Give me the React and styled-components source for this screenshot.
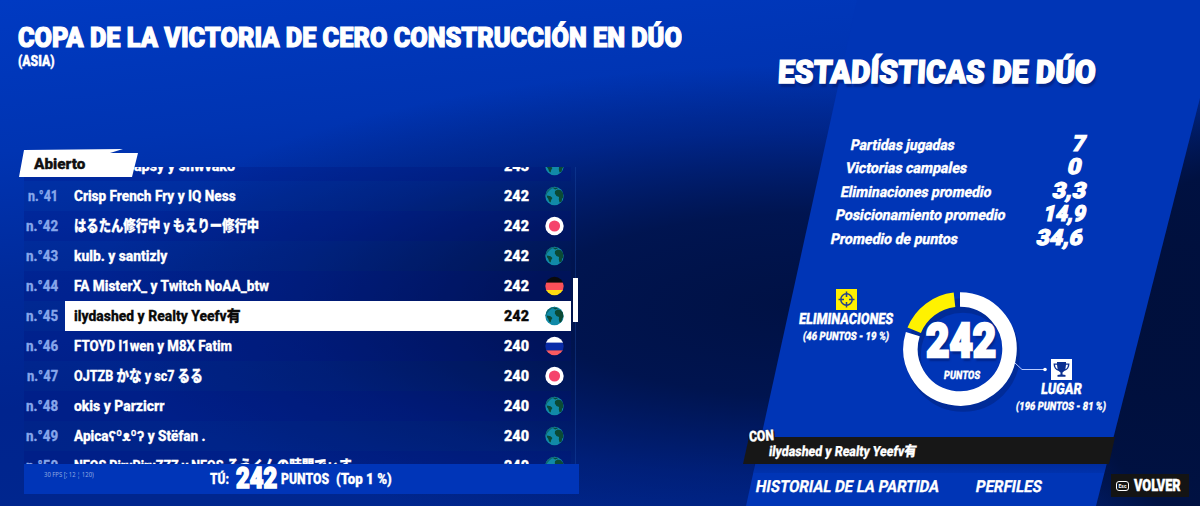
import React, { useLayoutEffect, useRef } from 'react'
import styled, { createGlobalStyle, css } from 'styled-components'

const GlobalStyle = createGlobalStyle`
    * { box-sizing: border-box; }
    body {
        margin: 0;
        overflow: hidden;
        font-family: Roboto, 'Noto Sans CJK JP', sans-serif;
        color: white;
    }
`
const Page = styled.div`
    position: relative;
    display: flex;
    width: 1200px;
    height: 506px;
    overflow: hidden;
    background:
        radial-gradient(ellipse 280px 300px at 1250px 350px, rgba(0, 15, 58, 0.95), rgba(0, 15, 58, 0.9) 60%, rgba(0, 15, 58, 0) 100%),
        radial-gradient(ellipse 720px 240px at 810px 305px, rgba(0, 16, 64, 0.95), rgba(0, 17, 68, 0.85) 38%, rgba(0, 18, 80, 0.35) 72%, rgba(0, 20, 90, 0) 100%),
        linear-gradient(174deg, #003ac2 0%, #0034b2 24%, #002a9a 45%, #00248e 65%, #00268e 82%, #002892 100%);
`
const FitBox = styled.span`
    display: inline-block;
    flex: none;
    white-space: pre;
    width: ${(p) => p.$w}px;
`
const FitInner = styled.span`
    display: inline-block;
    transform-origin: 0 50%;
    font-size: ${(p) => p.$size}px;
    font-weight: ${(p) => p.$weight || 900};
    -webkit-text-stroke: ${(p) => p.$stroke ?? 0.3}px currentColor;
    ${(p) => p.$shadow && css`text-shadow: 2px 4px 2px rgba(0, 20, 90, 0.45);`}
`
// Squeezes the text horizontally to the condensed width
const Fit = ({ w, size, weight, stroke, slant, shadow, children }) => {
    const ref = useRef(null)
    useLayoutEffect(() => {
        const el = ref.current
        el.style.transform = `skewX(${-(slant || 0)}deg) scaleX(${w / el.offsetWidth})`
    }, [w, slant])
    return (
        <FitBox $w={w}>
            <FitInner ref={ref} $size={size} $weight={weight} $stroke={stroke} $shadow={shadow}>{children}</FitInner>
        </FitBox>
    )
}

/* left side */
const Left = styled.main`
    width: 740px;
    height: 506px;
    display: flex;
    flex-direction: column;
`
const Header = styled.header`
    height: 150px;
    padding: 19px 0 0 18px;
    display: flex;
    flex-direction: column;
`
const Title = styled.h1`
    margin: 0;
    height: 34px;
    line-height: 34px;
`
const Region = styled.div`
    height: 16px;
    line-height: 16px;
`
const Board = styled.section`
    position: relative;
    margin: 17px 0 0 24px;
    width: 555px;
    height: 297px;
    display: flex;
`
const List = styled.div`
    width: 547px;
    height: 297px;
    flex: none;
    overflow: hidden;
    display: flex;
    flex-direction: column;
    justify-content: center;
`
const Tab = styled.div`
    position: absolute;
    left: -5px;
    top: -18px;
    width: 120px;
    height: 28px;
    padding: 5px 0 0 15px;
    line-height: 20px;
    color: #111;
    background: white;
    clip-path: polygon(5px 1px, 104px 0, 91px 4px, 119px 4px, 113px 28px, 0 28px);
`
const Row = styled.div`
    flex: none;
    display: flex;
    align-items: center;
    height: 30px;
    background: ${(p) => (p.$odd ? 'rgba(0, 14, 120, 0.25)' : 'rgba(0, 30, 110, 0.12)')};
`
const Rank = styled.div`
    width: 41px;
    display: flex;
    justify-content: flex-end;
    padding-right: 7px;
    color: #86a6ea;
`
const Entry = styled.div`
    flex: 1;
    height: 30px;
    display: flex;
    align-items: center;
    padding: 0 7px 0 ${(p) => 9 + (p.$indent || 0)}px;
    line-height: 29px;
    ${(p) => p.$active && css`
        background: white;
        color: #0a0a0a;
    `}
`
const Score = styled.div`
    margin-left: auto;
    margin-right: 16px;
    height: 30px;
`
const Track = styled.div`
    width: 8px;
    display: flex;
    justify-content: center;
    padding-top: 111px;
    background: linear-gradient(90deg, transparent 4px, rgba(30, 80, 170, 0.35) 4px, rgba(30, 80, 170, 0.35) 5px, transparent 5px);
`
const Thumb = styled.div`
    flex: none;
    width: 5px;
    height: 44px;
    background: white;
`
const Summary = styled.footer`
    position: relative;
    margin-left: 24px;
    width: 555px;
    height: 30px;
    padding-left: 186px;
    display: flex;
    align-items: center;
    line-height: 30px;
    background: #0035b8;
`
const Total = styled.div`
    padding-top: 3px;
`
const Fps = styled.div`
    position: absolute;
    left: 20px;
    top: 2px;
    font-family: 'Noto Sans', sans-serif;
    line-height: 10px;
    color: #8fa9e0;
`
const Gap = styled.span`
    flex: none;
    width: ${(p) => p.$w}px;
`

/* right side */
const Right = styled.aside`
    width: 460px;
    height: 506px;
    display: flex;
    flex-direction: column;
`
const Slab = styled.div`
    position: absolute;
    left: 746px;
    top: 0;
    width: 454px;
    height: 506px;
    background: #0035b6;
    clip-path: polygon(111px 0, 479px 0, 350px 506px, 0 506px);
`
const SlabBody = styled.div`
    position: relative;
    display: flex;
    flex-direction: column;
    height: 506px;
`
const StatsTitle = styled.h2`
    margin: 0;
    padding: 50px 0 0 38px;
    height: 132px;
    line-height: 44px;
`
const Stat = styled.div`
    display: flex;
    height: 23.4px;
    line-height: 24px;
    padding-left: ${(p) => p.$left}px;
    width: ${(p) => p.$end}px;
    justify-content: space-between;
`
const StatLabel = styled.div`
    padding-top: 1px;
`
const Chart = styled.div`
    display: flex;
    height: 176px;
    margin-top: 11px;
    padding: 29px 0 0 57px;
`
const Legend = styled.div`
    flex: none;
    width: 98px;
    margin-top: ${(p) => p.$top || 0}px;
    margin-left: ${(p) => p.$left || 0}px;
    display: flex;
    flex-direction: column;
    align-items: center;
    line-height: 18px;
`
const LegendNote = styled.div`
    line-height: 13px;
`
const Ring = styled.div`
    position: relative;
    flex: none;
    width: 130px;
    height: 130px;
    margin: -1px 0 0 4px;
`
const RingText = styled.div`
    position: absolute;
    inset: 0;
    display: flex;
    flex-direction: column;
    align-items: center;
    padding: 31px 7px 0 0;
    line-height: 44px;
`
const RingNumber = styled.div`
    height: 44px;
    margin-bottom: 1px;
`
const RingUnit = styled.div`
    padding-left: 3px;
    line-height: 20px;
`
const Team = styled.div`
    position: relative;
    flex: none;
    margin: 1px 0 0 3px;
    width: 372px;
    height: 27px;
    padding-left: 26px;
    line-height: 27px;
    background: #171717;
    clip-path: polygon(6px 0, 372px 0, 366px 27px, 0 27px);
`
const TeamShade = styled.div`
    height: 9px;
    margin-left: 14px;
    width: 356px;
    background: linear-gradient(rgba(0, 20, 90, 0.28), rgba(0, 20, 90, 0.1));
`
const With = styled.div`
    position: absolute;
    left: 7px;
    top: 426px;
    line-height: 20px;
    padding: 0 2px;
    transform: rotate(-4deg);
    text-shadow: 0 0 2px #171717, 2px 2px 0 #171717, -1px 2px 0 #171717;
`
const Links = styled.nav`
    display: flex;
    padding: 2px 0 0 16px;
    line-height: 24px;
`
const Back = styled.button`
    position: absolute;
    left: 371px;
    top: 474px;
    width: 78px;
    height: 23px;
    border: 0;
    padding: 0 0 0 5px;
    display: flex;
    align-items: center;
    gap: 5px;
    color: white;
    font-family: inherit;
    line-height: 25px;
    background: #141414;
`
const Key = styled.span`
    width: 13px;
    height: 10px;
    border: 1px solid white;
    border-radius: 3px;
    display: flex;
    justify-content: center;
    font-size: 5px;
    line-height: 8px;
`

const Flag = ({ kind }) => (
    <svg width="19" height="30" viewBox="0 0 19 30">
        <defs>
            <clipPath id="disc"><circle cx="9.5" cy="15" r="9.2" /></clipPath>
        </defs>
        <g clipPath="url(#disc)">
            {kind === 'world' && (
                <>
                    <rect y="5" width="19" height="20" fill="#118aa8" />
                    <path d="M0 15 C0.500 10 3 7 7 5 L11 5 10 6.500 7 7.500 4.500 9.500 2 12.500 1.200 15 Z" fill="#0e6a72" />
                    <path d="M2.2 14.5 L5.6 15.2 7.4 17 6.2 19 5.6 21.500 4.200 20.500 3 17.500 1.8 16 Z" fill="#0b4a36" />
                    <path d="M10 10 L12.500 8.600 15.500 9 18 11.500 18.600 16 17.300 17.500 16.500 21 14.500 21.500 13.800 18.500 14 16 11.500 15 9.800 12.600 Z" fill="#0b4a36" />
                    <path d="M8 7.500 L11.500 6.400 13 7.200 10.400 8.600 Z" fill="#0b4a36" />
                </>
            )}
            {kind === 'jp' && (
                <>
                    <rect y="5" width="19" height="20" fill="#fff" />
                    <circle cx="9.5" cy="15" r="5.6" fill="#f5436b" />
                </>
            )}
            {kind === 'de' && (
                <>
                    <rect y="5" width="19" height="7" fill="#0a0a0a" />
                    <rect y="11.6" width="19" height="8" fill="#fb5058" />
                    <rect y="19" width="19" height="6" fill="#ffdc10" />
                </>
            )}
            {kind === 'ru' && (
                <>
                    <rect y="5" width="19" height="7" fill="#fff" />
                    <rect y="11.6" width="19" height="8" fill="#0a2ca8" />
                    <rect y="19.4" width="19" height="6" fill="#fb5a60" />
                </>
            )}
        </g>
    </svg>
)

const rows = [
    { name: 'apsy y shwvako', w: 101, indent: 60, score: '243', flag: 'world' },
    { rank: '41', rw: 30, name: 'Crisp French Fry y IQ Ness', w: 162, score: '242', flag: 'world' },
    { rank: '42', rw: 32, name: 'はるたん修行中 y もえりー修行中', w: 185, score: '242', flag: 'jp' },
    { rank: '43', rw: 32, name: 'kulb. y santizly', w: 93, score: '242', flag: 'world' },
    { rank: '44', rw: 32, name: 'FA MisterX_ y Twitch NoAA_btw', w: 195, score: '242', flag: 'de' },
    { rank: '45', rw: 32, name: 'ilydashed y Realty Yeefv有', w: 167, score: '242', flag: 'world', active: true },
    { rank: '46', rw: 32, name: 'FTOYD l1wen y M8X Fatim', w: 158, score: '240', flag: 'ru' },
    { rank: '47', rw: 31, name: 'OJTZB かな y sc7 るる', w: 129, score: '240', flag: 'jp' },
    { rank: '48', rw: 32, name: 'okis y Parzicrr', w: 90, score: '240', flag: 'world' },
    { rank: '49', rw: 32, name: 'Apicaʕºᴥºʔ y Stëfan .', w: 132, score: '240', flag: 'world' },
    { rank: '50', rw: 32, name: 'NEOS PiruPiruZZZ y NEOS るうくんの時間でぃす', w: 278, score: '240', flag: 'world' },
]

const stats = [
    { label: 'Partidas jugadas', lw: 104, left: 111, value: '7', vw: 13, end: 346 },
    { label: 'Victorias campales', lw: 121, left: 106, value: '0', vw: 14, end: 342 },
    { label: 'Eliminaciones promedio', lw: 151, left: 101, value: '3,3', vw: 33, end: 346 },
    { label: 'Posicionamiento promedio', lw: 170, left: 96, value: '14,9', vw: 42, end: 346 },
    { label: 'Promedio de puntos', lw: 127, left: 91, value: '34,6', vw: 46, end: 343 },
]

const App = () => {
    return (
        <Page>
            <GlobalStyle />
            <Left>
                <Header>
                    <Title><Fit w={664} size={28.5} stroke={1.2}>COPA DE LA VICTORIA DE CERO CONSTRUCCIÓN EN DÚO</Fit></Title>
                    <Region><Fit w={37} size={15.5} stroke={0.4}>(ASIA)</Fit></Region>
                </Header>
                <Board>
                    <List>
                        {rows.map((r, i) => (
                            <Row key={i} $odd={i % 2 === 0}>
                                <Rank>{r.rank && <Fit w={r.rw} size={15} weight={800}>n.°{r.rank}</Fit>}</Rank>
                                <Entry $active={r.active} $indent={r.indent}>
                                    <Fit w={r.w} size={15} weight={800}>{r.name}</Fit>
                                    <Score><Fit w={25} size={15.5}>{r.score}</Fit></Score>
                                    <Flag kind={r.flag} />
                                </Entry>
                            </Row>
                        ))}
                    </List>
                    <Track><Thumb /></Track>
                    <Tab><Fit w={51} size={15}>Abierto</Fit></Tab>
                </Board>
                <Summary>
                    <Fps><Fit w={50} size={6.5} weight={400} stroke={0}>30 FPS [; 12 ¦ 120)</Fit></Fps>
                    <Fit w={19} size={15}>TÚ:</Fit>
                    <Gap $w={7} />
                    <Total><Fit w={41} size={29.5} stroke={1.6}>242</Fit></Total>
                    <Gap $w={4} />
                    <Fit w={48} size={15}>PUNTOS</Fit>
                    <Gap $w={7} />
                    <Fit w={56} size={15}>(Top 1 %)</Fit>
                </Summary>
            </Left>
            <Slab />
            <Right>
                <SlabBody>
                    <StatsTitle><Fit w={318} size={32} stroke={1.4} slant={3} shadow>ESTADÍSTICAS DE DÚO</Fit></StatsTitle>
                    {stats.map((s) => (
                        <Stat key={s.label} $left={s.left} $end={s.end}>
                            <StatLabel><Fit w={s.lw} size={15} weight={800} slant={11}>{s.label}</Fit></StatLabel>
                            <Fit w={s.vw} size={22} stroke={1.1} slant={12}>{s.value}</Fit>
                        </Stat>
                    ))}
                    <Chart>
                        <Legend>
                            <svg width="21" height="21" viewBox="0 0 21 21">
                                <rect width="21" height="21" fill="#fff000" />
                                <g fill="none" stroke="#27408a" strokeWidth="1.5">
                                    <circle cx="10.5" cy="10.5" r="5.7" />
                                    <path d="M10.5 2.500 V8 M10.5 13 V18.5 M2.5 10.5 H8 M13 10.5 H18.5" />
                                </g>
                            </svg>
                            <Fit w={94} size={15.5} slant={7}>ELIMINACIONES</Fit>
                            <LegendNote><Fit w={86} size={11.5} slant={8}>(46 PUNTOS - 19 %)</Fit></LegendNote>
                        </Legend>
                        <Ring>
                            <svg width="175" height="130" viewBox="0 0 175 130">
                                <g fill="none" strokeWidth="14.5" transform="translate(3 6)" stroke="#002b98">
                                    <circle cx="61" cy="61" r="49.5" />
                                </g>
                                <g fill="none" strokeWidth="14.5">
                                    <path d="M61 11.5 A49.5 49.5 0 1 1 13.8 46.1" stroke="#fff" />
                                    <path d="M15.2 42.2 A49.5 49.5 0 0 1 55.5 11.8" stroke="#fff200" />
                                </g>
                                <path d="M116 75 L123 81.5 H145" fill="none" stroke="#b9ccff" />
                                <circle cx="146" cy="81.5" r="1.8" fill="#fff" />
                            </svg>
                            <RingText>
                                <RingNumber><Fit w={70} size={49} stroke={2.6} shadow>242</Fit></RingNumber>
                                <RingUnit><Fit w={36} size={11.5} slant={7}>PUNTOS</Fit></RingUnit>
                            </RingText>
                        </Ring>
                        <Legend $top={70} $left={-17}>
                            <svg width="21" height="21" viewBox="0 0 21 21">
                                <rect width="21" height="21" fill="#fff" />
                                <path d="M6 3 H15 V4.500 H18.500 C18.500 8.500 16.500 11 13.300 12 L11.500 13.500 V15.500 L14.500 16 V17.800 H6.500 V16 L9.500 15.500 V13.500 L7.700 12 C4.500 11 2.500 8.500 2.500 4.500 H6 Z M4 5.800 C4.200 8 5 9.300 6.600 10.200 L6 5.800 Z M17 5.800 C16.800 8 16 9.300 14.400 10.200 L15 5.800 Z" fill="#0b2f90" fillRule="evenodd" />
                            </svg>
                            <Fit w={41} size={15.5} slant={7}>LUGAR</Fit>
                            <LegendNote><Fit w={90} size={11.5} slant={8}>(196 PUNTOS - 81 %)</Fit></LegendNote>
                        </Legend>
                    </Chart>
                    <Team><Fit w={148} size={14} weight={800} slant={7}>ilydashed y Realty Yeefv有</Fit></Team>
                    <TeamShade />
                    <With><Fit w={25} size={15}>CON</Fit></With>
                    <Links>
                        <Fit w={183} size={16.5} weight={700} slant={10}>HISTORIAL DE LA PARTIDA</Fit>
                        <Gap $w={37} />
                        <Fit w={66} size={16.5} weight={700} slant={10}>PERFILES</Fit>
                    </Links>
                    <Back>
                        <Key><Fit w={8} size={5} weight={700} stroke={0}>Esc</Fit></Key>
                        <Fit w={47} size={16} stroke={0.4}>VOLVER</Fit>
                    </Back>
                </SlabBody>
            </Right>
        </Page>
    )
}

export default App
